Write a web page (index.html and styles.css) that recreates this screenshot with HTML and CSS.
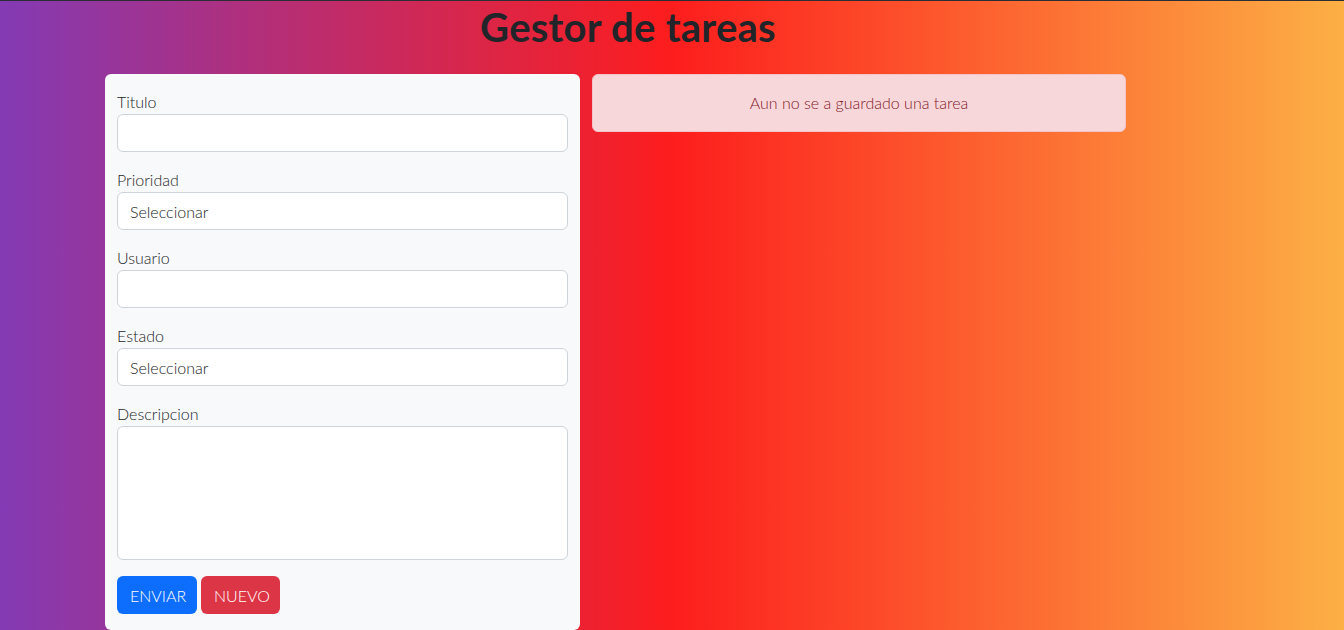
FILE: index.html
```html
<!DOCTYPE html>
<html lang="es">
<head>
<meta charset="utf-8">
<title>Gestor de tareas</title>
<link rel="stylesheet" href="styles.css">
</head>
<body>
<div class="page">
  <h1 class="title">Gestor de tareas</h1>
  <div class="row">
    <form class="card">
      <div class="group">
        <label class="label">Titulo</label>
        <input class="control" type="text">
      </div>
      <div class="group">
        <label class="label">Prioridad</label>
        <select class="control select"><option>Seleccionar</option></select>
      </div>
      <div class="group">
        <label class="label">Usuario</label>
        <input class="control" type="text">
      </div>
      <div class="group">
        <label class="label">Estado</label>
        <select class="control select"><option>Seleccionar</option></select>
      </div>
      <div class="group">
        <label class="label">Descripcion</label>
        <textarea class="control area"></textarea>
      </div>
      <div class="actions">
        <button type="button" class="btn btn-blue">ENVIAR</button>
        <button type="button" class="btn btn-red">NUEVO</button>
      </div>
    </form>
    <div class="alert">Aun no se a guardado una tarea</div>
  </div>
</div>
</body>
</html>
```

FILE: styles.css
```css
* { box-sizing: border-box; }
html, body { margin: 0; height: 100%; }
body {
  border-top: 1px solid #2c2e36;
  background: linear-gradient(to right, #833ab4 0%, #fd1d1d 50%, #fcb045 100%);
  font-family: Lato, "Open Sans", sans-serif;
  font-weight: 300;
  color: #212529;
  overflow: hidden;
}
.page {
  width: 1046px;
  margin-left: 105px;
}
.title {
  margin: 0;
  height: 73px;
  padding-top: 3px;
  text-align: center;
  font-size: 40px;
  letter-spacing: 0.25px;
  font-weight: 700;
  line-height: 46px;
  color: #212529;
}
.row {
  display: flex;
  align-items: flex-start;
  gap: 12px;
}
.card {
  width: 475px;
  background: #f8f9fa;
  border-radius: 6px;
  padding: 16px 12px 16px;
}
.group { margin-bottom: 16px; }
.label {
  display: block;
  font-size: 16px;
  line-height: 24px;
}
.control {
  display: block;
  width: 100%;
  height: 38px;
  border: 1px solid #ced4da;
  border-radius: 6px;
  background: #fff;
  padding: 6px 12px;
  font-family: inherit;
  font-weight: 300;
  font-size: 16px;
  color: #212529;
}
.select { appearance: none; -webkit-appearance: none; }
.area { height: 134px; resize: none; }
.actions { display: flex; gap: 4px; }
.btn {
  height: 38px;
  border: 0;
  border-radius: 6px;
  padding: 0 13px;
  font-family: inherit;
  font-weight: 300;
  font-size: 16px;
  color: #fff;
}
.btn-blue { background: #0d6efd; width: 80px; }
.btn-red { background: #dc3545; width: 79px; }
.alert {
  width: 534px;
  height: 58px;
  background: #f8d7da;
  border: 1px solid #f5c2c7;
  border-radius: 6px;
  color: #842029;
  text-align: center;
  font-size: 16px;
  line-height: 24px;
  padding: 16px;
}
```
